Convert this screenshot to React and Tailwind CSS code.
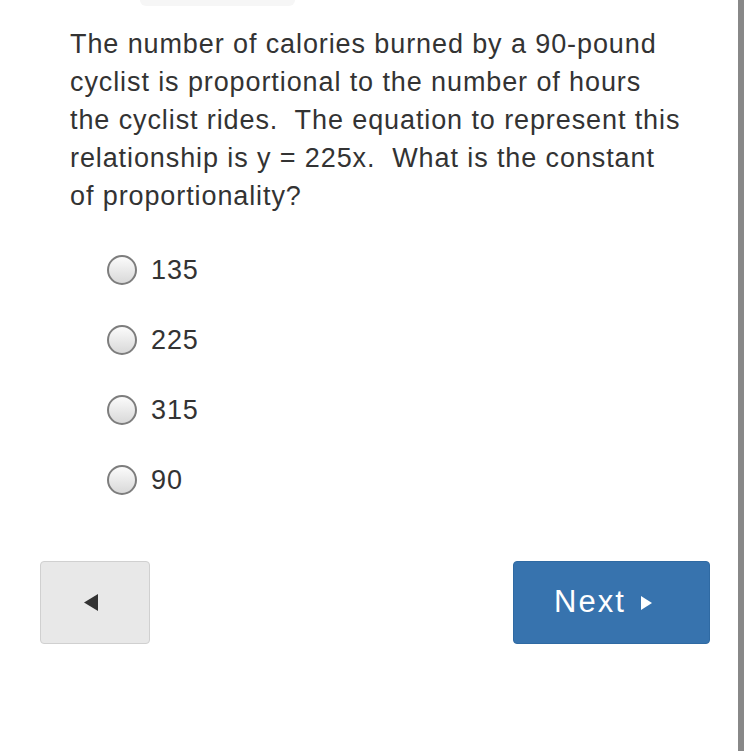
const choices = ["135", "225", "315", "90"];

function Radio({ label }) {
  return (
    <label className="flex h-[70px] items-center gap-[14px] pl-[107px]">
      <span className="h-[30px] w-[30px] shrink-0 rounded-full border-2 border-[#7d7d7d] bg-gradient-to-b from-[#fbfbfb] to-[#d9d9d9]" />
      <span className="text-[27px] tracking-[0.9px] text-[#333]">{label}</span>
    </label>
  );
}

export default function App() {
  return (
    <div className="flex h-[751px] w-[750px] bg-white font-['Liberation_Sans',Arial,sans-serif]">
      <div className="relative w-[738px]">
        <div className="absolute left-[140px] top-0 h-[6px] w-[155px] rounded-b-md bg-[#f6f6f6]" />
        <p className="ml-[70px] w-[614px] pt-[25px] text-[27px] leading-[38px] tracking-[0.9px] text-[#333]">
          The number of calories burned by a 90-pound cyclist is proportional to the number of hours the cyclist rides.{"\u00a0 "}The equation to represent this relationship is y = 225x.{"\u00a0 "}What is the constant of proportionality?
        </p>
        <div className="mt-[20px]">
          {choices.map((c) => (
            <Radio key={c} label={c} />
          ))}
        </div>
        <div className="mt-[46px] flex justify-between pl-[40px] pr-[28px]">
          <button className="flex h-[83px] w-[110px] items-center justify-center rounded border border-[#d0d0d0] bg-[#e8e8e8] pr-[8px]">
            <svg width="14" height="17" viewBox="0 0 14 17">
              <path d="M14 0 L14 17 L0 8.5 Z" fill="#333" />
            </svg>
          </button>
          <button className="flex h-[83px] w-[197px] items-center justify-start gap-[15px] rounded border border-[#2f6aa3] bg-[#3773ae] pl-[40px] text-[31px] tracking-[2px] text-white">
            <span>Next</span>
            <svg width="11" height="14" viewBox="0 0 11 14">
              <path d="M0 0 L11 7 L0 14 Z" fill="#fff" />
            </svg>
          </button>
        </div>
      </div>
      <div className="w-[6px] bg-[#888]" />
    </div>
  );
}
